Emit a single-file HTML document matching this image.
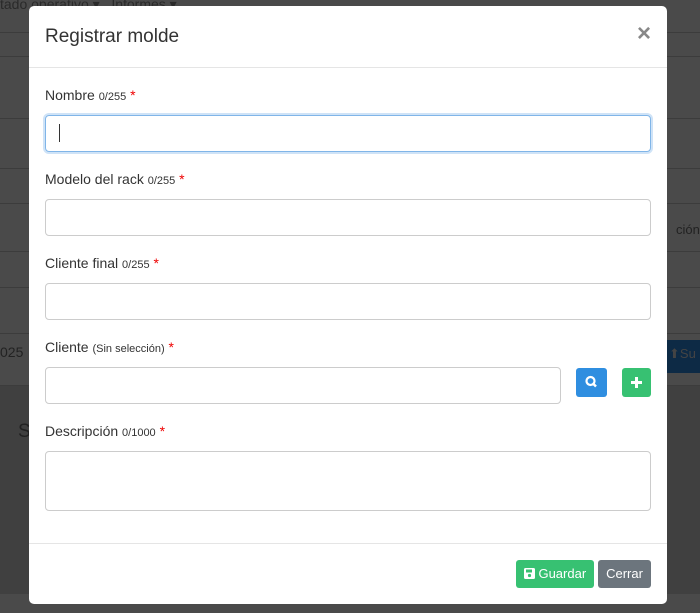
<!DOCTYPE html>
<html><head><meta charset="utf-8"><style>
*{box-sizing:border-box;margin:0;padding:0}
body{width:700px;height:613px;overflow:hidden;background:#4a4a4a;font-family:"Liberation Sans",sans-serif;position:relative}
.bg{position:absolute;color:#333;white-space:nowrap}
.hl{position:absolute;left:0;right:0;height:1px;background:#3c3c3c}
.modal{position:absolute;left:29px;top:6px;width:638px;height:598px;background:#fff;border-radius:5px}
.hdr{height:62px;border-bottom:1px solid #e5e5e5;position:relative}
.hdr h4{position:absolute;left:16px;top:20px;font-size:19px;font-weight:normal;color:#333}
.x{position:absolute;right:16px;top:14px;font-size:24px;color:#888;font-weight:bold}
.lbl{position:absolute;left:16px;font-size:14px;color:#333;white-space:nowrap}
.lbl small{font-size:11px}
.lbl b{color:#e00;font-weight:normal}
.inp{position:absolute;left:16px;width:606px;height:37px;border:1px solid #ccc;border-radius:4px}
.btn{position:absolute;border-radius:3px;color:#fff;font-size:13px;text-align:center;white-space:nowrap}
</style></head><body>
<div class="bg" style="top:-4px;left:0;font-size:14px;color:#2a2a2a">tado operativo ▾ &nbsp; Informes ▾</div>
<div class="hl" style="top:32px"></div>
<div class="hl" style="top:56px"></div>
<div class="hl" style="top:118px"></div>
<div class="hl" style="top:168px"></div>
<div class="hl" style="top:203px"></div>
<div class="hl" style="top:251px"></div>
<div class="hl" style="top:287px"></div>
<div class="hl" style="top:333px"></div>
<div class="hl" style="top:385px"></div>
<div class="hl" style="top:449px"></div>
<div style="position:absolute;left:0;top:386px;width:700px;height:208px;background:#404040"></div>
<div class="bg" style="top:344px;left:0;font-size:14px;color:#222">025</div>
<div class="bg" style="top:421px;left:18px;font-size:19px;color:#222">S</div>
<div class="bg" style="top:222px;left:676px;font-size:13px;color:#222">ción 8</div>
<div style="position:absolute;left:667px;top:340px;width:33px;height:33px;background:#0d2a45;color:#444;font-size:13px;padding:6px 0 0 2px;white-space:nowrap;overflow:hidden">⬆Su</div>
<div class="modal">
<div class="hdr"><h4>Registrar molde</h4><span class="x">×</span></div>
<div class="lbl" style="top:81px">Nombre <small>0/255</small> <b>*</b></div>
<div class="inp" style="top:109px;border:1px solid #80b5e8;box-shadow:0 0 0 2px #cfe3f7"><div style="position:absolute;left:13px;top:8px;width:1px;height:18px;background:#333"></div></div>
<div class="lbl" style="top:165px">Modelo del rack <small>0/255</small> <b>*</b></div>
<div class="inp" style="top:193px"></div>
<div class="lbl" style="top:249px">Cliente final <small>0/255</small> <b>*</b></div>
<div class="inp" style="top:277px"></div>
<div class="lbl" style="top:333px">Cliente <small>(Sin selección)</small> <b>*</b></div>
<div class="inp" style="top:361px;width:516px"></div>
<div class="btn" style="left:547px;top:362px;width:31px;height:29px;background:#2f8ee0"><svg width="31" height="29"><circle cx="14.5" cy="13" r="4" stroke="#fff" stroke-width="2.2" fill="none"/><line x1="17.5" y1="16" x2="20" y2="18.5" stroke="#fff" stroke-width="2.5"/></svg></div>
<div class="btn" style="left:593px;top:362px;width:29px;height:29px;background:#37c172"><svg width="29" height="29"><path d="M14.5 9v11M9 14.5h11" stroke="#fff" stroke-width="3"/></svg></div>
<div class="lbl" style="top:417px">Descripción <small>0/1000</small> <b>*</b></div>
<div class="inp" style="top:445px;height:60px"></div>
<div style="position:absolute;left:0;right:0;top:537px;height:1px;background:#e5e5e5"></div>
<div class="btn" style="left:487px;top:554px;width:78px;height:28px;background:#37c172;line-height:28px"><svg width="11" height="11" style="vertical-align:-1px"><rect x="0" y="0" width="11" height="11" rx="1.5" fill="#fff"/><rect x="2" y="1.5" width="6" height="3" fill="#37c172"/><circle cx="5.5" cy="7.5" r="1.6" fill="#37c172"/></svg> Guardar</div>
<div class="btn" style="left:569px;top:554px;width:53px;height:28px;background:#6c757d;line-height:28px">Cerrar</div>
</div>
</body></html>
